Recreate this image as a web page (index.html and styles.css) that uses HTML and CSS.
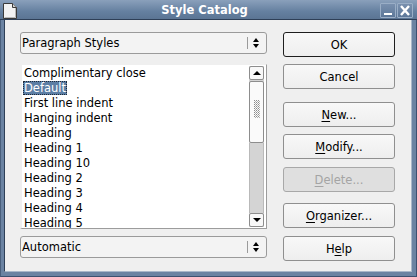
FILE: index.html
```html
<!DOCTYPE html>
<html>
<head>
<meta charset="utf-8">
<link rel="stylesheet" href="styles.css">
</head>
<body>
<div class="win">
  <div class="titlebar">
    <svg class="appicon" width="14" height="16" viewBox="0 0 14 16">
      <path d="M0.5 0.5 H9.5 L13.5 4.5 V15.5 H0.5 Z" fill="#f2f2f2" stroke="#3a3a3a"/>
      <path d="M9.5 0.5 V4.5 H13.5" fill="#d0d0d0" stroke="#3a3a3a"/>
      <path d="M1.5 14.5 H12.5 V5" fill="none" stroke="#b8b8b8"/>
    </svg>
    <div class="title">Style Catalog</div>
    <div class="wbtns">
      <span class="wbtn"><span class="minbar"></span></span>
      <span class="wbtn">
        <svg width="14" height="13" viewBox="0 0 14 13"><path d="M3 2 L11 11 M11 2 L3 11" stroke="#fff" stroke-width="2.4"/></svg>
      </span>
    </div>
  </div>
  <div class="body">
    <div class="left">
      <div class="combo">
        <span class="combo-text">Paragraph Styles</span>
        <span class="spin"><span class="sep"></span><span class="arrows"><span class="up"></span><span class="down"></span></span></span>
      </div>
      <div class="list">
        <div class="items">
          <div class="item"><span>Complimentary close</span></div>
          <div class="item"><span class="sel">Default</span></div>
          <div class="item"><span>First line indent</span></div>
          <div class="item"><span>Hanging indent</span></div>
          <div class="item"><span>Heading</span></div>
          <div class="item"><span>Heading 1</span></div>
          <div class="item"><span>Heading 10</span></div>
          <div class="item"><span>Heading 2</span></div>
          <div class="item"><span>Heading 3</span></div>
          <div class="item"><span>Heading 4</span></div>
          <div class="item"><span>Heading 5</span></div>
        </div>
        <div class="sb">
          <div class="sbbtn"><span class="tri-up"></span></div>
          <div class="thumb"><span class="grip"></span></div>
          <div class="trough"></div>
          <div class="sbbtn"><span class="tri-down"></span></div>
        </div>
      </div>
      <div class="combo">
        <span class="combo-text">Automatic</span>
        <span class="spin"><span class="sep"></span><span class="arrows"><span class="up"></span><span class="down"></span></span></span>
      </div>
    </div>
    <div class="right">
      <div class="btn default g1">OK</div>
      <div class="btn g2">Cancel</div>
      <div class="btn g3"><u>N</u>ew...</div>
      <div class="btn g4"><u>M</u>odify...</div>
      <div class="btn disabled g5"><u>D</u>elete...</div>
      <div class="btn g6"><u>O</u>rganizer...</div>
      <div class="btn">H<u>e</u>lp</div>
    </div>
  </div>
</div>
</body>
</html>
```
FILE: styles.css
```css
html, body {
  margin: 0;
  padding: 0;
}
body {
  width: 417px;
  height: 277px;
  overflow: hidden;
  font-family: "DejaVu Sans", sans-serif;
  font-size: 11.5px;
  color: #000;
}
.win {
  width: 417px;
  height: 277px;
  box-sizing: border-box;
  display: flex;
  flex-direction: column;
  background: #6b83a2;
  border-left: 1px solid #4a5f7c;
  border-right: 1px solid #3c5070;
  border-bottom: 1px solid #3c5070;
}
.titlebar {
  height: 19px;
  flex: none;
  display: flex;
  align-items: center;
  background: linear-gradient(#8aa0bb, #6580a0 60%, #5b7594);
  border-bottom: 1px solid #2e3f57;
  margin: 0 -1px;
  padding: 0 4px 0 3px;
  position: relative;
}
.appicon {
  flex: none;
  margin-top: 2px;
}
.title {
  flex: 1;
  text-align: center;
  color: #fff;
  font-weight: bold;
  font-size: 11.5px;
  padding-left: 12px;
}
.wbtns {
  display: flex;
  gap: 1px;
  margin-top: 2px;
}
.wbtn {
  width: 16px;
  height: 15px;
  box-sizing: border-box;
  border: 1px solid #9aaec6;
  border-radius: 1px;
  background: linear-gradient(#7990ae, #5d7899);
  display: flex;
  align-items: center;
  justify-content: center;
  position: relative;
}
.minbar {
  position: absolute;
  left: 3px;
  right: 3px;
  bottom: 2px;
  height: 2px;
  background: #fff;
}
.body {
  flex: 1;
  margin: 0 4px 4px 3px;
  background: #efefef;
  border-left: 1px solid #2e3f57;
  border-right: 1px solid #a9b7c9;
  border-bottom: 1px solid #a9b7c9;
  display: flex;
  padding: 12px 0 0 15px;
  gap: 16px;
}
.left {
  width: 247px;
  display: flex;
  flex-direction: column;
}
.combo {
  height: 22px;
  box-sizing: border-box;
  border: 1px solid #9a9a9a;
  border-radius: 3px;
  background: #f3f3f3;
  display: flex;
  align-items: center;
  padding-left: 1px;
}
.combo-text {
  flex: 1;
  white-space: nowrap;
}
.spin {
  display: flex;
  align-items: center;
  height: 100%;
}
.sep {
  width: 1px;
  height: 12px;
  background: #9a9a9a;
  margin-right: 5px;
}
.arrows {
  display: flex;
  flex-direction: column;
  gap: 2px;
  width: 7px;
  margin-right: 6px;
}
.up, .down {
  width: 0;
  height: 0;
  border-left: 3.5px solid transparent;
  border-right: 3.5px solid transparent;
}
.up { border-bottom: 4px solid #000; }
.down { border-top: 4px solid #000; }
.list {
  margin-top: 10px;
  margin-bottom: 7px;
  height: 165px;
  box-sizing: border-box;
  background: #fff;
  border-top: 1px solid #efefef;
  border-left: 2px solid #efefef;
  border-right: 1px solid #9c9c9c;
  border-bottom: 1px solid #9c9c9c;
  display: flex;
  overflow: hidden;
}
.items {
  flex: 1;
  padding: 1px 0 0 1px;
  overflow: hidden;
}
.item {
  height: 15px;
  line-height: 15px;
  white-space: nowrap;
}
.item span {
  padding: 0 1px;
  display: inline-block;
  height: 14px;
  line-height: 15px;
}
.item .sel {
  background: #5c7ea4;
  color: #fff;
  outline: 1px dotted #1d2a3a;
  outline-offset: -1px;
}
.sb {
  width: 15px;
  margin: 1px 2px 1px 1px;
  display: flex;
  flex-direction: column;
  background: #d4d4d4;
}
.sbbtn {
  height: 14px;
  box-sizing: border-box;
  border: 1px solid #8d8d8d;
  border-radius: 2px;
  background: #f8f8f8;
  display: flex;
  align-items: center;
  justify-content: center;
}
.tri-up, .tri-down {
  width: 0;
  height: 0;
  border-left: 4px solid transparent;
  border-right: 4px solid transparent;
}
.tri-up { border-bottom: 4px solid #000; }
.tri-down { border-top: 4px solid #000; }
.thumb {
  height: 62px;
  margin-top: 1px;
  box-sizing: border-box;
  border: 1px solid #8d8d8d;
  border-radius: 2px;
  background: #fafafa;
  display: flex;
  align-items: center;
  justify-content: center;
}
.grip {
  width: 6px;
  height: 18px;
  background-image: radial-gradient(circle at 0.5px 0.5px, #8c8c8c 0.6px, transparent 0.8px),
                    radial-gradient(circle at 1.5px 1.5px, #b0b0b0 0.6px, transparent 0.8px);
  background-size: 2px 2px;
  margin-top: -6px;
}
.trough {
  flex: 1;
  border-left: 1px solid #b9b9b9;
  border-right: 1px solid #b9b9b9;
}
.right {
  width: 112px;
  display: flex;
  flex-direction: column;
}
.btn {
  height: 25px;
  box-sizing: border-box;
  border: 1px solid #8f8f8f;
  border-radius: 3px;
  background: linear-gradient(#f8f8f8, #eeeeee);
  display: flex;
  align-items: center;
  justify-content: center;
  white-space: nowrap;
}
.btn u {
  text-decoration-thickness: 1px;
  text-underline-offset: 2px;
}
.btn.default {
  border-color: #1e1e1e;
}
.btn.disabled {
  background: #dfdfdf;
  border-color: #a8a8a8;
  color: #a4a4a4;
}
.g1 { margin-bottom: 7px; }
.g2 { margin-bottom: 13px; }
.g3 { margin-bottom: 7px; }
.g4 { margin-bottom: 8px; }
.g5 { margin-bottom: 11px; }
.g6 { margin-bottom: 8px; }
```
